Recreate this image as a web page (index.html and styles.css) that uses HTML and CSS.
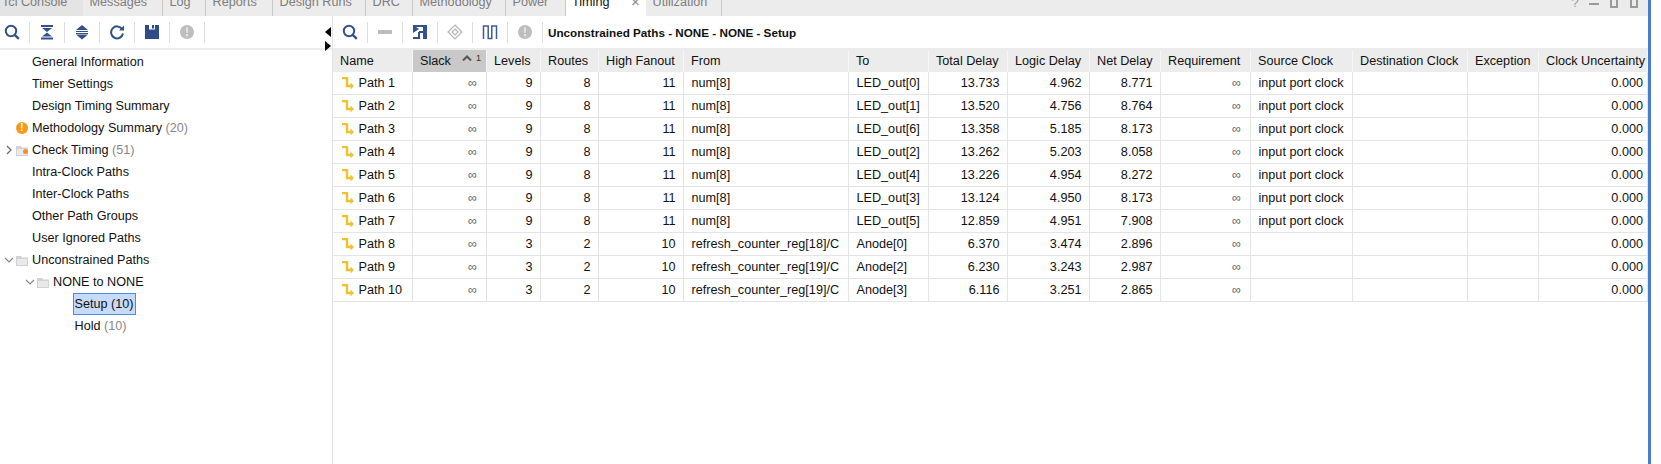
FILE: index.html
```html
<!DOCTYPE html>
<html lang="en">
<head>
    <meta charset="UTF-8">
    <title>Timing</title>
    <link rel="stylesheet" href="styles.css">
</head>
<body>

<svg class="defs">
    <symbol id="i-search" viewBox="0 0 16 16">
        <circle cx="7" cy="7" r="5.2" fill="none" stroke="#33528a" stroke-width="2"/>
        <path d="M10.8 10.8 L14.8 14.8" stroke="#33528a" stroke-width="2.4"/>
    </symbol>
    <symbol id="i-alert" viewBox="0 0 16 16">
        <circle cx="8" cy="8" r="7" fill="#bdbdbd"/>
        <path d="M7 3.5 H9 L8.7 9 H7.3 Z M7 10.3 H9 V12.3 H7 Z" fill="#e8e8e8"/>
    </symbol>
    <symbol id="i-path" viewBox="0 0 14 12">
        <path d="M1 1 H6 V9 H10" fill="none" stroke="#eec12e" stroke-width="2.4"/>
        <path d="M9.5 5.5 L13 9 L9.5 12.5 Z" fill="#eec12e"/>
    </symbol>
    <symbol id="i-folder" viewBox="0 0 12 11">
        <path d="M0 1 H5 L6 2.5 H12 V11 H0 Z" fill="#d2d2d2"/>
        <path d="M1 4 H11 V10 H1 Z" fill="#e9e9e9"/>
    </symbol>
</svg>

<div class="window">
    <div class="tabs">
        <div class="tab tab-first">Tcl Console</div>
        <div class="tab t-messages">Messages</div>
        <div class="tab t-log">Log</div>
        <div class="tab t-reports">Reports</div>
        <div class="tab t-runs">Design Runs</div>
        <div class="tab t-drc">DRC</div>
        <div class="tab t-method">Methodology</div>
        <div class="tab t-power">Power</div>
        <div class="tab tab-active">Timing <span class="tab-close">&times;</span></div>
        <div class="tab t-util">Utilization</div>
        <div class="win-icons">
            <span class="win-help">?</span>
            <span class="win-min"></span>
            <span class="win-max"></span>
            <span class="win-float"></span>
        </div>
    </div>

    <div class="main">
        <div class="left">
            <div class="toolbar">
                <div class="tool tool-first"><svg class="icon"><use href="#i-search"/></svg></div>
                <div class="tool">
                    <svg class="icon" viewBox="0 0 16 16"><path d="M2 1 H14 V3 H2 Z M3 4 H13 L8 8 Z M3 12.5 L8 8.5 L13 12.5 Z M2 13.5 H14 V15.5 H2 Z" fill="#33528a"/></svg>
                </div>
                <div class="tool">
                    <svg class="icon" viewBox="0 0 16 16"><path d="M8 1 L14 6 H2 Z M2 7 H14 V8 H2 Z M2 9 H14 V10 H2 Z M2 10.5 H14 L8 15.5 Z" fill="#33528a"/></svg>
                </div>
                <div class="tool">
                    <svg class="icon" viewBox="0 0 16 16"><path d="M13.2 5.2 A6 6 0 1 0 14 9.5" fill="none" stroke="#33528a" stroke-width="2"/><path d="M10 6.5 H15 V1.5 Z" fill="#33528a"/></svg>
                </div>
                <div class="tool">
                    <svg class="icon" viewBox="0 0 16 16"><path d="M1 1 H5 V5.5 H11 V1 H15 V15 H1 Z M8 1 H10 V4.5 H8 Z" fill="#2f4d85"/></svg>
                </div>
                <div class="tool"><svg class="icon"><use href="#i-alert"/></svg></div>
            </div>

            <div class="tree">
                <div class="node"><span class="twist"></span><span class="node-icon"></span>General Information</div>
                <div class="node"><span class="twist"></span><span class="node-icon"></span>Timer Settings</div>
                <div class="node"><span class="twist"></span><span class="node-icon"></span>Design Timing Summary</div>
                <div class="node"><span class="twist"></span><span class="node-icon"><span class="warn">!</span></span><span>Methodology Summary <span class="count">(20)</span></span></div>
                <div class="node">
                    <span class="twist"><svg class="chev" viewBox="0 0 10 10"><path d="M3 1 L7 5 L3 9" fill="none" stroke="#666" stroke-width="1.2"/></svg></span>
                    <span class="node-icon"><svg class="folder"><use href="#i-folder"/></svg><span class="folder-dot"></span></span>
                    <span>Check Timing <span class="count">(51)</span></span>
                </div>
                <div class="node"><span class="twist"></span><span class="node-icon"></span>Intra-Clock Paths</div>
                <div class="node"><span class="twist"></span><span class="node-icon"></span>Inter-Clock Paths</div>
                <div class="node"><span class="twist"></span><span class="node-icon"></span>Other Path Groups</div>
                <div class="node"><span class="twist"></span><span class="node-icon"></span>User Ignored Paths</div>
                <div class="node">
                    <span class="twist"><svg class="chev" viewBox="0 0 10 10"><path d="M1 3 L5 7 L9 3" fill="none" stroke="#888" stroke-width="1.2"/></svg></span>
                    <span class="node-icon"><svg class="folder"><use href="#i-folder"/></svg></span>
                    <span>Unconstrained Paths</span>
                </div>
                <div class="node lvl1">
                    <span class="twist"><svg class="chev" viewBox="0 0 10 10"><path d="M1 3 L5 7 L9 3" fill="none" stroke="#888" stroke-width="1.2"/></svg></span>
                    <span class="node-icon"><svg class="folder"><use href="#i-folder"/></svg></span>
                    <span>NONE to NONE</span>
                </div>
                <div class="node lvl2"><span class="selected">Setup (10)</span></div>
                <div class="node lvl2"><span class="plain">Hold <span class="count">(10)</span></span></div>
            </div>
        </div>

        <div class="right">
            <div class="toolbar">
                <div class="tool"><svg class="icon"><use href="#i-search"/></svg></div>
                <div class="tool"><svg class="icon" viewBox="0 0 16 16"><path d="M1 6 H15 V10 H1 Z" fill="#bcbcbc"/></svg></div>
                <div class="tool">
                    <svg class="icon" viewBox="0 0 16 16"><path d="M1 1 L7 5 L1 9 Z M1 1 H15 V15 H11 V9 H7 V7 H11 V3 H1 Z M1 13 H6 V8 H8 V15 H1 Z" fill="#33528a"/></svg>
                </div>
                <div class="tool">
                    <svg class="icon" viewBox="0 0 16 16"><path d="M8 1 L15 8 L8 15 L1 8 Z M8 5 L11 8 L8 11 L5 8 Z" fill="none" stroke="#b5b5b5" stroke-width="1.2"/></svg>
                </div>
                <div class="tool">
                    <svg class="icon" viewBox="0 0 16 16"><path d="M1.5 15 V2 H6.2 V14.5 H9.8 V2 H14.5 V15" fill="none" stroke="#3f5c96" stroke-width="1.5"/></svg>
                </div>
                <div class="tool"><svg class="icon"><use href="#i-alert"/></svg></div>
                <div class="report-title">Unconstrained Paths - NONE - NONE - Setup</div>
            </div>

            <table class="paths">
                <thead>
                    <tr>
                        <th class="c-name">Name</th>
                        <th class="c-slack sorted"><div class="sort-head">Slack<span class="sort-mark"><svg class="sort-caret" viewBox="0 0 10 6"><path d="M1 5.5 L5 1.5 L9 5.5" fill="none" stroke="#555" stroke-width="2"/></svg><span class="sort-num">1</span></span></div></th>
                        <th class="c-levels">Levels</th>
                        <th class="c-routes">Routes</th>
                        <th class="c-fanout">High Fanout</th>
                        <th class="c-from">From</th>
                        <th class="c-to">To</th>
                        <th class="c-total">Total Delay</th>
                        <th class="c-logic">Logic Delay</th>
                        <th class="c-net">Net Delay</th>
                        <th class="c-req">Requirement</th>
                        <th class="c-src">Source Clock</th>
                        <th class="c-dest">Destination Clock</th>
                        <th class="c-exc">Exception</th>
                        <th class="c-unc">Clock Uncertainty</th>
                    </tr>
                </thead>
                <tbody>
                    <tr><td><div class="path-name"><svg class="path-icon"><use href="#i-path"/></svg>Path 1</div></td><td class="num inf">∞</td><td class="num">9</td><td class="num">8</td><td class="num">11</td><td>num[8]</td><td>LED_out[0]</td><td class="num">13.733</td><td class="num">4.962</td><td class="num">8.771</td><td class="num inf">∞</td><td>input port clock</td><td></td><td></td><td class="num last">0.000</td></tr>
                    <tr><td><div class="path-name"><svg class="path-icon"><use href="#i-path"/></svg>Path 2</div></td><td class="num inf">∞</td><td class="num">9</td><td class="num">8</td><td class="num">11</td><td>num[8]</td><td>LED_out[1]</td><td class="num">13.520</td><td class="num">4.756</td><td class="num">8.764</td><td class="num inf">∞</td><td>input port clock</td><td></td><td></td><td class="num last">0.000</td></tr>
                    <tr><td><div class="path-name"><svg class="path-icon"><use href="#i-path"/></svg>Path 3</div></td><td class="num inf">∞</td><td class="num">9</td><td class="num">8</td><td class="num">11</td><td>num[8]</td><td>LED_out[6]</td><td class="num">13.358</td><td class="num">5.185</td><td class="num">8.173</td><td class="num inf">∞</td><td>input port clock</td><td></td><td></td><td class="num last">0.000</td></tr>
                    <tr><td><div class="path-name"><svg class="path-icon"><use href="#i-path"/></svg>Path 4</div></td><td class="num inf">∞</td><td class="num">9</td><td class="num">8</td><td class="num">11</td><td>num[8]</td><td>LED_out[2]</td><td class="num">13.262</td><td class="num">5.203</td><td class="num">8.058</td><td class="num inf">∞</td><td>input port clock</td><td></td><td></td><td class="num last">0.000</td></tr>
                    <tr><td><div class="path-name"><svg class="path-icon"><use href="#i-path"/></svg>Path 5</div></td><td class="num inf">∞</td><td class="num">9</td><td class="num">8</td><td class="num">11</td><td>num[8]</td><td>LED_out[4]</td><td class="num">13.226</td><td class="num">4.954</td><td class="num">8.272</td><td class="num inf">∞</td><td>input port clock</td><td></td><td></td><td class="num last">0.000</td></tr>
                    <tr><td><div class="path-name"><svg class="path-icon"><use href="#i-path"/></svg>Path 6</div></td><td class="num inf">∞</td><td class="num">9</td><td class="num">8</td><td class="num">11</td><td>num[8]</td><td>LED_out[3]</td><td class="num">13.124</td><td class="num">4.950</td><td class="num">8.173</td><td class="num inf">∞</td><td>input port clock</td><td></td><td></td><td class="num last">0.000</td></tr>
                    <tr><td><div class="path-name"><svg class="path-icon"><use href="#i-path"/></svg>Path 7</div></td><td class="num inf">∞</td><td class="num">9</td><td class="num">8</td><td class="num">11</td><td>num[8]</td><td>LED_out[5]</td><td class="num">12.859</td><td class="num">4.951</td><td class="num">7.908</td><td class="num inf">∞</td><td>input port clock</td><td></td><td></td><td class="num last">0.000</td></tr>
                    <tr><td><div class="path-name"><svg class="path-icon"><use href="#i-path"/></svg>Path 8</div></td><td class="num inf">∞</td><td class="num">3</td><td class="num">2</td><td class="num">10</td><td>refresh_counter_reg[18]/C</td><td>Anode[0]</td><td class="num">6.370</td><td class="num">3.474</td><td class="num">2.896</td><td class="num inf">∞</td><td></td><td></td><td></td><td class="num last">0.000</td></tr>
                    <tr><td><div class="path-name"><svg class="path-icon"><use href="#i-path"/></svg>Path 9</div></td><td class="num inf">∞</td><td class="num">3</td><td class="num">2</td><td class="num">10</td><td>refresh_counter_reg[19]/C</td><td>Anode[2]</td><td class="num">6.230</td><td class="num">3.243</td><td class="num">2.987</td><td class="num inf">∞</td><td></td><td></td><td></td><td class="num last">0.000</td></tr>
                    <tr><td><div class="path-name"><svg class="path-icon"><use href="#i-path"/></svg>Path 10</div></td><td class="num inf">∞</td><td class="num">3</td><td class="num">2</td><td class="num">10</td><td>refresh_counter_reg[19]/C</td><td>Anode[3]</td><td class="num">6.116</td><td class="num">3.251</td><td class="num">2.865</td><td class="num inf">∞</td><td></td><td></td><td></td><td class="num last">0.000</td></tr>
                </tbody>
            </table>
        </div>

        <div class="sash-left"></div>
        <div class="sash-right"></div>
    </div>
</div>

</body>
</html>
```

FILE: styles.css
```css
html, body {
    margin: 0;
    padding: 0;
    height: 100%;
    background-color: white;
    overflow: hidden;
}
body {
    font-family: "Liberation Sans", Arial, sans-serif;
    font-size: 12.65px;
    color: #111;
}
.defs {
    display: none;
}
.window {
    width: 1648px;
    height: 464px;
    border-right: 3px solid #4a7ccf;
    display: flex;
    flex-direction: column;
}

/* tab strip, cut off at the top of the shot */
.tabs {
    height: 16px;
    flex: none;
    display: flex;
    align-items: flex-end;
    background-color: #ececec;
    overflow: hidden;
}
.tab {
    height: 28px;
    line-height: 28px;
    box-sizing: border-box;
    padding-left: 6.5px;
    color: #7d7d7d;
    white-space: nowrap;
    border-right: 1px solid #c9c9c9;
    flex: none;
}
.t-messages { width: 80px; }
.t-log { width: 43px; }
.t-reports { width: 67px; }
.t-runs { width: 93px; }
.t-drc { width: 47px; }
.t-method { width: 93px; }
.t-power { width: 60px; }
.t-util { width: 76px; }
.tab-first {
    width: 83px;
    padding-left: 2px;
    background-color: #e4e4e4;
    border-right: none;
}
.tab-active {
    width: 80px;
    padding-left: 6px;
    background-color: white;
    color: #111;
    border-right: none;
    position: relative;
}
.tab-close {
    position: absolute;
    left: 65px;
    top: 0;
    font-size: 15px;
    color: #888;
}
.win-icons {
    margin-left: auto;
    height: 28px;
    display: flex;
    align-items: center;
    color: #999;
}
.win-help {
    width: 28px;
    font-size: 13px;
    text-align: center;
}
.win-min, .win-max, .win-float {
    display: block;
    box-sizing: border-box;
}
.win-min {
    width: 10px;
    height: 8px;
    margin-right: 11px;
    margin-top: -2px;
    border-bottom: 2px solid #999;
}
.win-max, .win-float {
    width: 8px;
    height: 14px;
    margin-right: 12px;
    margin-top: -2px;
    border: 1px solid #999;
    border-width: 0 2px 2px;
}
.win-float {
    margin-right: 10px;
}

.main {
    flex: 1;
    display: flex;
    min-height: 0;
    position: relative;
}
.left {
    width: 333px;
    box-sizing: border-box;
    flex: none;
    border-right: 1px solid #e4e4e4;
}
.right {
    flex: 1;
    min-width: 0;
}

/* toolbars */
.toolbar {
    height: 34px;
    box-sizing: border-box;
    display: flex;
    align-items: center;
    border-bottom: 2px solid #ececec;
}
.tool {
    width: 35px;
    height: 21px;
    flex: none;
    display: flex;
    align-items: center;
    justify-content: center;
    border-right: 1px solid #dcdcdc;
    box-sizing: border-box;
}
.tool-first {
    width: 30px;
    justify-content: flex-start;
    padding-left: 4px;
}
.icon {
    width: 16px;
    height: 16px;
    display: block;
}
.report-title {
    margin-left: 5px;
    font-size: 11.7px;
    font-weight: bold;
    white-space: nowrap;
}

/* the two small arrows on the divider */
.sash-left, .sash-right {
    position: absolute;
    left: 325px;
    width: 0;
    height: 0;
    border-style: solid;
    border-color: transparent;
}
.sash-left {
    top: 11px;
    border-width: 5px 6px 5px 0;
    border-right-color: black;
}
.sash-right {
    top: 25px;
    border-width: 5px 0 5px 6px;
    border-left-color: black;
}

/* tree */
.tree {
    padding-top: 1px;
}
.node {
    height: 22px;
    display: flex;
    align-items: center;
    padding-left: 2px;
    white-space: nowrap;
}
.node.lvl1 {
    padding-left: 23px;
}
.node.lvl2 {
    padding-left: 73px;
}
.twist {
    width: 14px;
    flex: none;
    display: flex;
    justify-content: center;
}
.chev {
    width: 10px;
    height: 10px;
    display: block;
}
.node-icon {
    width: 16px;
    height: 16px;
    flex: none;
    position: relative;
    display: flex;
    align-items: center;
}
.folder {
    width: 12px;
    height: 11px;
    display: block;
}
.folder-dot {
    position: absolute;
    left: 7px;
    top: 7px;
    width: 5px;
    height: 5px;
    border-radius: 50%;
    background-color: #f5901e;
}
.warn {
    width: 12px;
    height: 12px;
    border-radius: 50%;
    background-color: #f8991d;
    color: white;
    font-size: 10px;
    font-weight: bold;
    line-height: 12px;
    text-align: center;
}
.count {
    color: #888;
}
.selected {
    display: block;
    padding: 0 1px 0 0.5px;
    height: 20px;
    line-height: 20px;
    border: 1px solid #4a90d9;
    background-color: #c6dbf9;
}
.plain {
    display: block;
    padding-left: 1.5px;
}

/* paths table */
.paths {
    table-layout: fixed;
    border-collapse: separate;
    border-spacing: 0;
    width: 1315px;
}
.paths th {
    height: 22px;
    padding: 0 0 0 7px;
    box-sizing: border-box;
    background-color: #ececec;
    border-right: 1px solid #f6f6f6;
    font-weight: normal;
    text-align: left;
    white-space: nowrap;
    overflow: hidden;
}
.paths th.sorted {
    background-color: #c9c9c9;
}
.paths td {
    height: 23px;
    padding: 0 7.5px 0 7.5px;
    box-sizing: border-box;
    border-right: 1px solid #e4e4e4;
    border-bottom: 1px solid #e4e4e4;
    white-space: nowrap;
    overflow: hidden;
}
.paths td.num {
    text-align: right;
}
.paths td.inf {
    color: #666;
    padding-right: 9px;
}
.paths td.last {
    padding-right: 4px;
}
.path-name {
    display: flex;
    align-items: center;
}
.path-icon {
    width: 14px;
    height: 12px;
    margin-right: 4px;
    flex: none;
}
.sort-head {
    display: flex;
    align-items: center;
}
.sort-mark {
    margin-left: auto;
    margin-right: 5px;
    display: flex;
    align-items: flex-start;
    height: 14px;
}
.sort-caret {
    width: 10px;
    height: 6px;
    margin-top: 1px;
    display: block;
}
.sort-num {
    font-size: 9px;
    margin-left: 4px;
    line-height: 8px;
    color: #333;
}
.c-name { width: 80px; }
.c-slack { width: 74px; }
.c-levels { width: 54px; }
.c-routes { width: 58px; }
.c-fanout { width: 85px; }
.c-from { width: 165px; }
.c-to { width: 80px; }
.c-total { width: 79px; }
.c-logic { width: 82px; }
.c-net { width: 71px; }
.c-req { width: 90px; }
.c-src { width: 102px; }
.c-dest { width: 115px; }
.c-exc { width: 71px; }
.c-unc { width: 109px; }
```
